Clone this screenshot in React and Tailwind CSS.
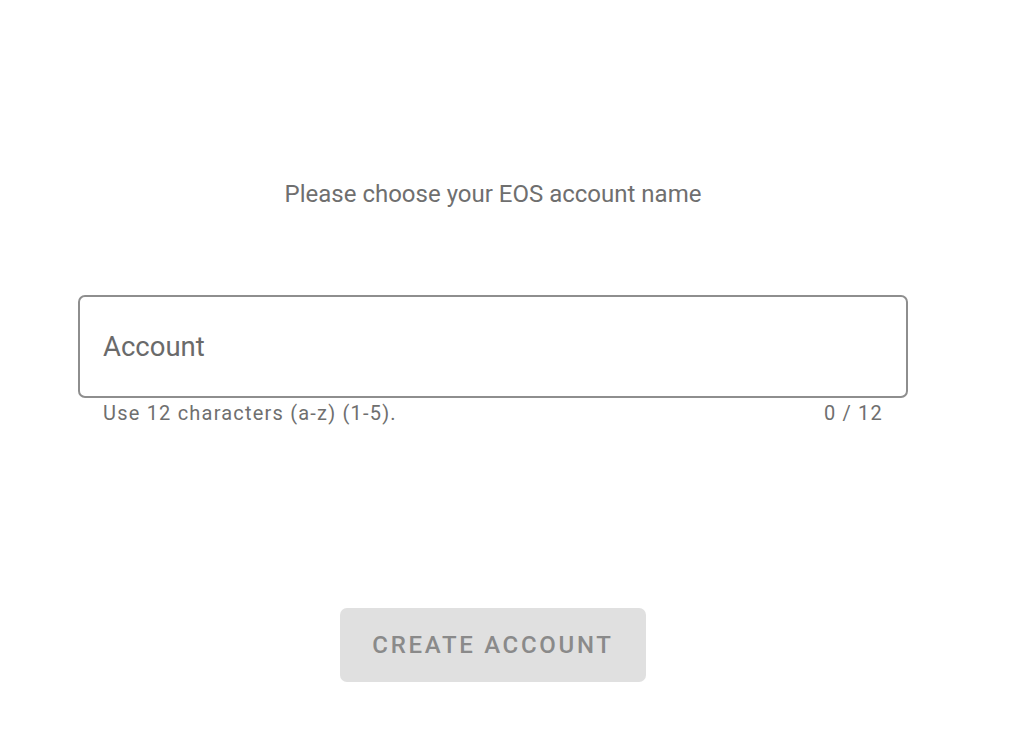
import React, { useState } from 'react'

function App() {
  const [account, setAccount] = useState('')

  return (
    <div className="min-h-[742px] w-[1024px] bg-white font-['Roboto',sans-serif]">
      <div className="ml-[78px] flex w-[830px] flex-col items-center">
        {/* Title */}
        <p className="mt-[179px] text-[24px] leading-[30px] text-[#6f6f6f]">
          Please choose your EOS account name
        </p>

        {/* Account field */}
        <div className="mt-[86px] w-full">
          <div className="flex h-[103px] items-center rounded-[7px] border-2 border-[#8e8e8e] px-[23px]">
            <input
              value={account}
              maxLength={12}
              onChange={(e) => setAccount(e.target.value)}
              placeholder="Account"
              className="w-full bg-transparent text-[27.5px] text-[#555] placeholder-[#6a6a6a] outline-none"
            />
          </div>
          <div className="mt-[3px] flex justify-between px-[25px] text-[20px] leading-[25px] tracking-[1.2px] text-[#6f6f6f]">
            <span>Use 12 characters (a-z) (1-5).</span>
            <span>{account.length} / 12</span>
          </div>
        </div>

        {/* Create button */}
        <button
          disabled
          className="mt-[182px] h-[74px] w-[306px] rounded-[7px] bg-[#e0e0e0] text-[24px] font-medium uppercase tracking-[2.7px] text-[#8a8a8a]"
        >
          Create Account
        </button>
      </div>
    </div>
  )
}

export default App
